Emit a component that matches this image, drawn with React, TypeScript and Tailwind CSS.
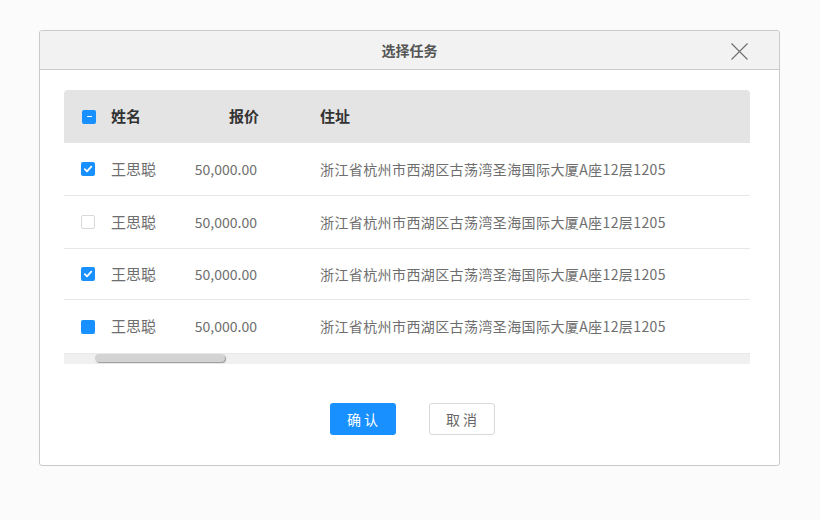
import React from "react";

const font = { fontFamily: '"Noto Sans CJK SC", "Noto Sans", sans-serif' };

function Box({ state }: { state: "checked" | "empty" | "filled" | "half" }) {
  if (state === "empty") {
    return <span className="block w-[14px] h-[14px] rounded-[2px] border border-[#d9d9d9] bg-white" />;
  }
  return (
    <span className="flex items-center justify-center w-[14px] h-[14px] rounded-[2px] bg-[#1890ff]">
      {state === "checked" && (
        <svg width="10" height="10" viewBox="0 0 10 10">
          <path d="M1.8 5.2 L4 7.3 L8.3 2.6" fill="none" stroke="#fff" strokeWidth="1.8" strokeLinecap="round" strokeLinejoin="round" />
        </svg>
      )}
      {state === "half" && <span className="block w-[5px] h-[1px] bg-white" />}
    </span>
  );
}

const rows: { state: "checked" | "empty" | "filled"; h: string }[] = [
  { state: "checked", h: "h-[53px]" },
  { state: "empty", h: "h-[53px]" },
  { state: "checked", h: "h-[51px]" },
  { state: "filled", h: "h-[53px]" },
];

export default function App() {
  return (
    <div className="w-[820px] h-[520px] bg-[#fbfbfb] pt-[30px] pl-[39px]" style={font}>
      <div className="w-[741px] h-[436px] border border-[#c9c9c9] rounded-[3px] bg-white flex flex-col overflow-hidden">
        <div className="h-[39px] shrink-0 bg-[#f2f2f2] border-b border-[#cccccc] flex items-center justify-center relative">
          <span className="text-[14px] font-bold text-[#555] leading-none">选择任务</span>
          <svg className="absolute left-[691px] top-[12px]" width="17" height="17" viewBox="0 0 17 17">
            <path d="M0.5 0.5 L16.5 16.5 M16.5 0.5 L0.5 16.5" stroke="#6f6f6f" strokeWidth="1.1" fill="none" />
          </svg>
        </div>
        <div className="pt-[20px] pl-[24px] pr-[28px] flex flex-col">
          <div className="w-[686px]">
            <div className="h-[53px] bg-[#e4e4e4] rounded-t-[4px] flex items-center text-[15px] font-bold text-[#333]">
              <div className="w-[47px] pl-[18px] flex items-center"><Box state="half" /></div>
              <div className="w-[70px]">姓名</div>
              <div className="w-[78px] text-right">报价</div>
              <div className="pl-[61px]">住址</div>
            </div>
            {rows.map((r, i) => (
              <div key={i} className={`${r.h} flex items-center text-[15px] text-[#6e6e6e] ${i < 3 ? "border-b border-[#e6e6e6]" : ""}`}>
                <div className="w-[47px] pl-[17px] flex items-center"><Box state={r.state} /></div>
                <div className="w-[70px]">王思聪</div>
                <div className="w-[76px] text-right text-[14px]">50,000.00</div>
                <div className="pl-[63px] text-[14px] tracking-[0.4px]">浙江省杭州市西湖区古荡湾圣海国际大厦A座12层1205</div>
              </div>
            ))}
            <div className="h-[11px] bg-[#f0f0f0] border-t border-[#e8e8e8] pl-[31px]">
              <div className="w-[130px] h-[8px] rounded-full bg-[#d3d3d3] shadow-[1px_1px_1px_#9a9a9a]" />
            </div>
          </div>
          <div className="flex justify-center gap-[33px] mt-[39px] pl-[9px]">
            <button className="w-[66px] h-[32px] rounded-[3px] bg-[#1890ff] text-white text-[14px] tracking-[3px] pl-[3px]">确认</button>
            <button className="w-[66px] h-[32px] rounded-[3px] border border-[#d9d9d9] bg-white text-[#666] text-[14px] tracking-[3px] pl-[3px]">取消</button>
          </div>
        </div>
      </div>
    </div>
  );
}
